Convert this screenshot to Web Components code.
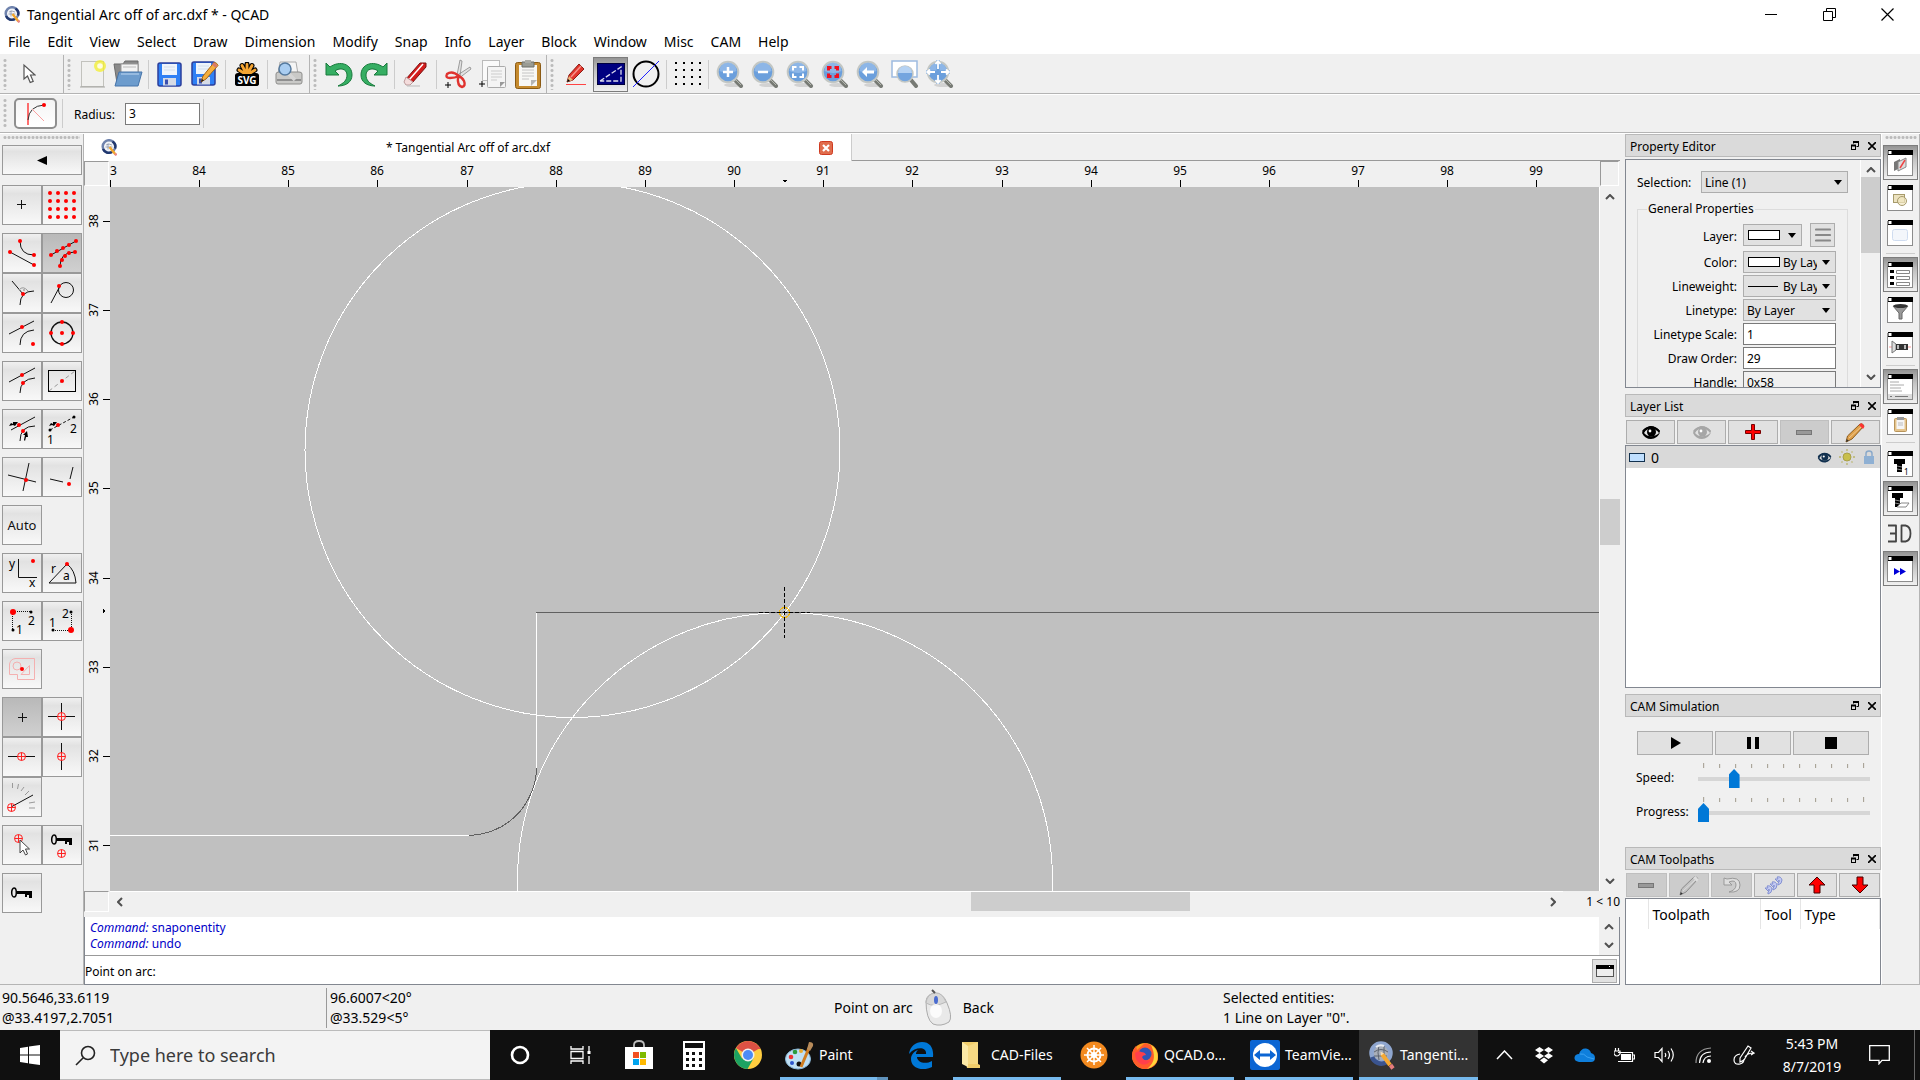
<!DOCTYPE html>
<html lang="en">
<head>
<meta charset="utf-8">
<title>Tangential Arc off of arc.dxf * - QCAD</title>
<style>
html,body{margin:0;height:100%}
body{font-family:"Noto Sans","Open Sans",sans-serif;font-size:12px;color:#000;background:#f0f0f0;overflow:hidden}
</style>
</head>
<body>
<cad-app></cad-app>
<script>
/* ---------- icon artwork ---------- */
const lens = inner => `<ellipse cx="17" cy="25" rx="9" ry="2" fill="#000" opacity=".12"/><path d="M18 19l7 7" stroke="#777a74" stroke-width="4" stroke-linecap="round"/><path d="M19 19l6 6" stroke="#b5b8b0" stroke-width="1"/><circle cx="12" cy="12" r="10.300" fill="#6b9fdc" stroke="#c3c7c4" stroke-width="2"/><path d="M3.500 11a8.500 8.500 0 0 1 17 0q-8 4-17 0z" fill="#a3c6ef" opacity=".6"/>${inner}`;
const frame = inner => `<rect x=".5" y="1.500" width="25" height="24" fill="#fff" stroke="#8c8c8c"/><rect x="1" y="0" width="25" height="5" fill="#000"/><rect x="1.500" y="1" width="3" height="3" fill="#fff"/>${inner}`;
const dot = (x,y,r=2) => `<circle cx="${x}" cy="${y}" r="${r}" fill="#f00"/>`;
const bdot = (x,y) => `<circle cx="${x}" cy="${y}" r="1.500"/>`;
const target = (x,y) => `<g fill="none" stroke="#f22"><circle cx="${x}" cy="${y}" r="4"/><path d="M${x-4} ${y}h8M${x} ${y-4}v8"/></g>`;
const ln = (d,extra='') => `<path d="${d}" fill="none" stroke="#111" ${extra}/>`;
const key = (x,y) => `<g transform="translate(${x} ${y})"><ellipse cx="3" cy="5.500" rx="2.300" ry="4.500" fill="none" stroke="#000" stroke-width="1.500"/><path d="M6 4h15v7h-3V8h-2v2h-2V7H6z"/></g>`;
const qlogo = `<circle cx="8" cy="7.500" r="6.300" fill="#f2f4f8" stroke="#6f83ad" stroke-width="2.500"/><path d="M2 10a6.300 6.300 0 0 0 9 3M14 9.500a6 6 0 0 0-2.500-7" fill="none" stroke="#21386f" stroke-width="2.400"/><path d="M4.500 8h7M7 4.500v6M5 6q3-2 6 0" stroke="#8b95a8" fill="none" stroke-width=".8"/><path d="M8.500 8l6 7.500" stroke="#f2a62a" stroke-width="2.400"/><path d="M14 14.500l1.500 1.800" stroke="#e98a8a" stroke-width="2.400"/>`;
const floppy = `<rect x="1" y="1" width="23" height="23" rx="2" fill="#2f80f5" stroke="#2c3f9c" stroke-width="1.500"/><rect x="5" y="2" width="15" height="11" fill="#eef4fb"/><path d="M7 5h11M7 8h11" stroke="#d4deea"/><rect x="6" y="16" width="13" height="7.500" fill="#d6dbe6"/><rect x="8" y="17.500" width="3" height="5" fill="#3a4fae"/>`;
const eye = c => `<path d="M1 8C3 3 7 1 10 1s7 2 9 5l-1 1C15 3 12 3 10 3 6 3 3 6 3 8c3 4 11 5 16-1-1 4-5 7-9 7-4 0-7-2-9-6z" fill="${c}"/><circle cx="10.500" cy="7" r="4.500" fill="${c}"/><circle cx="9" cy="6" r="1.400" fill="#fff"/><path d="M1 6C4 1 14-1 19 6l-1 2C14 2 6 2 3 8z" fill="${c}"/>`;
const pencil = (a,b,c) => `<path d="M2 20l1.500-6L16 2q3-1 4 2L8 17z" fill="${a}" stroke="${b}"/><path d="M15 3l4 4 1.500-2.500L17.500 1z" fill="${c}"/><path d="M5 16L17 5" stroke="#fff" opacity=".4"/><path d="M2 20l.8-3 2 1.800z" fill="#333"/>`;
const arrowUp = `<path d="M9 1l8 8h-5v8H6V9H1z" fill="#f00" stroke="#400" stroke-linejoin="round"/>`;
const ICONS = {
 qcad:[16,17,qlogo],
 qcadBig:[26,30,`<circle cx="12" cy="13" r="9.500" fill="#a9afb9" stroke="#8fa6cf" stroke-width="4.500"/><path d="M3 17a10 10 0 0 0 14 5.500" fill="none" stroke="#3a548f" stroke-width="4.500"/><path d="M5 12q7-5 14 0M5 16h13M10 5q-2 8 0 15M15 6v12" fill="none" stroke="#5d6470"/><path d="M7 7q4-3 8-1" stroke="#e8ebf0" stroke-width="2" fill="none"/><path d="M13 14l8 11" stroke="#f5a933" stroke-width="4"/><path d="M21.500 25l2.500 3.500" stroke="#e77c7c" stroke-width="4"/><path d="M11.500 11.500l3.500 2-3 2z" fill="#f4dcb4"/>`],
 cursor:[14,22,`<path d="M2 2v14l3.500-3 2.700 6.500 3-1.200L8.500 12H13z" fill="#fff" stroke="#555" stroke-width="1.200"/>`],
 newdoc:[28,30,`<rect x="2.500" y="2.500" width="22" height="25" fill="#f1f1ef" stroke="#c2c2bd"/><path d="M1 28h25" stroke="#a5a5a0"/><circle cx="21" cy="7" r="6" fill="#f3ef2c" opacity=".75"/><circle cx="21" cy="7" r="2.800" fill="#fffde0"/>`],
 open:[30,28,`<path d="M1 4h9l2-3h13v22H4z" fill="#8a8a8a" stroke="#6b6b6b"/><path d="M8 4h17v12H8z" fill="#f3f3f3" stroke="#999"/><path d="M10 7h13" stroke="#bbb"/><path d="M6 12h23l-4 14H2z" fill="#6d9ccd" stroke="#4674aa"/><path d="M8 14h18" stroke="#a5c5e6" stroke-width="1.500"/>`],
 save:[25,25,floppy],
 saveas:[28,26,floppy+`<path d="M10 21l2-6L23 1.500q3 0 4 3L15 18z" fill="#f5ae3d" stroke="#a86513"/><path d="M22 2.500l3.500 3" stroke="#d8786a" stroke-width="3"/><path d="M10 21l1-3 2 1.500z" fill="#222"/>`],
 svg:[24,24,`<rect x="0" y="11" width="24" height="13" rx="3"/><path d="M12 13L4 8M12 13L7 3.500M12 13V2M12 13l5-9.500M12 13l8-5" stroke="#000" stroke-width="5" stroke-linecap="round"/><path d="M12 13L4 8M12 13L7 3.500M12 13V2.500M12 13l5-9.500M12 13l8-5" stroke="#f5a533" stroke-width="2.800" stroke-linecap="round"/><rect x="0" y="12" width="24" height="12" rx="3"/><text x="12" y="22" fill="#fff" font-size="10" font-weight="700" text-anchor="middle">SVG</text>`],
 preview:[30,28,`<path d="M6 2h16l2 12H4z" fill="#f5f5f5" stroke="#aaa"/><path d="M2 14q0-2 3-2h20q3 0 3 2v8q0 2-2 2H4q-2 0-2-2z" fill="#c9c9c7" stroke="#8d8d8b"/><path d="M3 20h24" stroke="#8f8f8f" stroke-width="2"/><path d="M15 14l6 6" stroke="#d5d5d5" stroke-width="3.500"/><circle cx="11" cy="9" r="6" fill="#a9cdf1" stroke="#54799e" stroke-width="1.500"/>`],
 undo:[28,26,`<path d="M1 2l4 4C15-1 27 3 27 14c0 7-6 11-14 11 6-3 9-6 9-11 0-6-7-8-12-4l4 4H1z" fill="#36ae63" stroke="#187a3c"/>`],
 redo:[28,26,`<path transform="translate(28 0) scale(-1 1)" d="M1 2l4 4C15-1 27 3 27 14c0 7-6 11-14 11 6-3 9-6 9-11 0-6-7-8-12-4l4 4H1z" fill="#36ae63" stroke="#187a3c"/>`],
 eraser:[25,26,`<path d="M3 18L17 2h6v4L9 22z" fill="#d41c1c" stroke="#7c1010"/><path d="M6 19L20 3" stroke="#fff" stroke-width="1.500"/><path d="M3 16l7 5-3 3H3l-2-3z" fill="#f4dcdc" stroke="#b99"/><path d="M4 25h13" stroke="#bbb"/>`],
 cut:[28,30,`<path d="M13 16L16 1l2 1-2 15zM12 17L26 8l1 2-13 10z" fill="#e2e2e2" stroke="#888" stroke-width=".8"/><path d="M15 17q-7-6-12-2-2 4 3 4 5 0 9-2zM14 17q-1 10 4 11 4-1 2-6-2-4-6-5z" fill="none" stroke="#e0332f" stroke-width="2.400"/><path d="M1 26h6M4 23v6" stroke="#000"/>`],
 copy:[30,30,`<rect x="4.500" y="1.500" width="17" height="20" fill="#fafafa" stroke="#bbb"/><rect x="9.500" y="7.500" width="18" height="21" rx="1" fill="#f4f4f4" stroke="#aaa"/><path d="M13 12h11M13 15h11M13 18h11M13 21h6" stroke="#ccc"/><path d="M27 23l-5 5v-5z" fill="#999"/><path d="M1 25h6M4 22v6" stroke="#000"/>`],
 paste:[28,30,`<rect x="1.500" y="3.500" width="25" height="26" rx="2" fill="#c58a2e" stroke="#8a5a14"/><rect x="5" y="6" width="18" height="21" fill="#f7f7f5"/><path d="M8 11h12M8 14h12M8 17h12M8 20h7" stroke="#c4c4c4"/><path d="M8 3h12v5H8z" fill="#9a9c94" stroke="#6d6f68"/><path d="M11 1h6v3h-6z" fill="#a9aaa4"/><path d="M23 21l-6 6v-6z" fill="#b5b5b5"/>`],
 redpen:[22,24,`<path d="M2 20l2-7L14 2l5 5L8 18z" fill="#e2352c" stroke="#8c1c14"/><path d="M6 15L16 4" stroke="#f5948c" stroke-width="1.500"/><path d="M2 20l2-6 4 4z" fill="#e8b77a"/><path d="M2 20l1-3 2 2z"/><path d="M1 22.500h20" stroke="#f44"/>`],
 linetype:[28,22,`<rect width="28" height="22" fill="#000080" stroke="#000"/><path d="M3 18L24 4v14H3" fill="none" stroke="#dde" stroke-width="1.300" stroke-dasharray="5 2"/>`],
 hair:[28,28,`<circle cx="14" cy="14" r="12.500" fill="none" stroke="#000" stroke-width="2"/><path d="M1 27L27 1" stroke="#22f"/>`],
 grid:[28,28,Array.from({length:16},(_,i)=>`<rect x="${1+(i%4)*8}" y="${2+(i>>2)*7}" width="2" height="2"/>`).join('')],
 zin:[28,28,lens('<path d="M12 7v10M7 12h10" stroke="#fff" stroke-width="2.500"/>')],
 zout:[28,28,lens('<path d="M7 12h10" stroke="#fff" stroke-width="2.500"/>')],
 zauto:[28,28,lens('<path d="M7 10.500V7h3.500M13.500 7H17v3.500M17 13.500V17h-3.500M10.500 17H7v-3.500" fill="none" stroke="#fff" stroke-width="2"/>')],
 zsel:[28,28,lens('<path d="M7.500 10.500v-3h3M13.500 7.500h3v3M16.500 13.500v3h-3M10.500 16.500h-3v-3" fill="none" stroke="#f01020" stroke-width="3"/>')],
 zprev:[28,28,lens('<path d="M6 12l5-5v3.500h7v3h-7V17z" fill="#fff"/>')],
 zwin:[28,28,`<rect x="1" y="1" width="25" height="16" fill="#fff" stroke="#9dbbe0" stroke-width="1.500"/><path d="M20 20l5 6" stroke="#777a74" stroke-width="4" stroke-linecap="round"/><circle cx="14" cy="14" r="8" fill="#74a5df" stroke="#c3c7c4" stroke-width="1.500"/><path d="M7 13a7 7 0 0 1 14 0z" fill="#b5d2f3"/>`],
 zpan:[28,28,lens('<path d="M12 0v24M0 12h24" stroke="#6b9fdc" stroke-width="3"/><path d="M12 1v8M12 15v8M1 12h8M15 12h8M9.500 4L12 1l2.500 3M9.500 20l2.500 3 2.500-3M4 9.500L1 12l3 2.500M20 9.500l3 2.500-3 2.500" fill="none" stroke="#fff" stroke-width="1.800"/>')],
 tanarc:[24,24,`<path d="M4 1v22" stroke="#f22" stroke-width="1.300"/><path d="M4 18Q5 4 20 3" fill="none" stroke="#333"/><path d="M8 7l12 12" stroke="#f9a0a0"/>${dot(20,3)}`],
 close:[14,14,`<rect x=".5" y=".5" width="13" height="13" rx="2" fill="#e06c4c" stroke="#cf3a20"/><path d="M4 4l6 6M10 4l-6 6" stroke="#fff" stroke-width="2.200"/>`],
 up:[10,6,`<path d="M1 5l4-4 4 4" fill="none" stroke="#505050" stroke-width="2"/>`],
 down:[10,6,`<path d="M1 1l4 4 4-4" fill="none" stroke="#505050" stroke-width="2"/>`],
 left:[6,10,`<path d="M5 1L1 5l4 4" fill="none" stroke="#505050" stroke-width="2"/>`],
 right:[6,10,`<path d="M1 1l4 4-4 4" fill="none" stroke="#505050" stroke-width="2"/>`],
 float:[8,9,`<path d="M2.500 2.500v-2h5v5h-2" fill="none" stroke="#000"/><path d="M2 1h6" stroke="#000" stroke-width="2"/><rect x=".5" y="4.500" width="4" height="4" fill="none" stroke="#000"/><path d="M0 4.500h5" stroke="#000" stroke-width="2"/>`],
 x:[8,8,`<path d="M0 0l8 8M8 0L0 8" stroke="#000" stroke-width="1.600"/>`],
 min:[12,12,`<path d="M0 6.500h12" stroke="#000"/>`],
 restore:[13,13,`<path d="M3.500 3V.5h9v9H10M.5 3.500h9v9h-9z" fill="none" stroke="#000"/>`],
 bigx:[13,13,`<path d="M.5 .5l12 12M12.500 .5l-12 12" stroke="#000" stroke-width="1.200"/>`],
 lines:[16,14,`<path d="M1 1.500h14M1 7h14M1 12.500h14" stroke="#888" stroke-width="2.200" stroke-linecap="round"/>`],
 console:[18,12,`<rect x=".5" y=".5" width="17" height="11" fill="#eee" stroke="#555"/><path d="M0 2h18" stroke="#000" stroke-width="4"/><rect x="13" y="1" width="1" height="1" fill="#fff"/>`],
 eyeBlack:[20,14,eye('#000')], eyeGray:[20,14,eye('#a6a6a6')], eyeBlue:[15,11,`<g transform="scale(.75)">${eye('#12314f')}</g>`],
 plus:[16,16,`<path d="M6.500 .5h3v6h6v3h-6v6h-3v-6h-6v-3h6z" fill="#f00" stroke="#700"/>`],
 minus:[16,5,`<rect x=".5" y=".5" width="15" height="4" fill="#999" stroke="#777"/>`],
 pen:[22,21,pencil('#e0a14a','#8a5b20','#f33')], penGray:[22,21,pencil('#c4c4c4','#8a8a8a','#ddd')],
 undoGray:[20,18,`<path d="M2 2v7h8L7 6q7-3 7 3 0 5-7 7 11 1 11-7 0-9-13-6z" fill="#dedede" stroke="#999"/>`],
 chain:[22,20,`<g fill="#c3caf2" stroke="#8390d2"><path id="s" d="M2 13h3l-1-2q4-1 5 3 0 4-4 5v-2q2-1 1-3l-1 2z"/><path d="M7 9h3L9 7q4-1 5 3 0 4-4 5v-2q2-1 1-3l-1 2z"/><path d="M12 4h3l-1-2q4-1 5 3 0 4-4 5V8q2-1 1-3l-1 2z"/></g>`],
 arrowup:[18,18,arrowUp], arrowdown:[18,18,`<g transform="rotate(180 9 9)">${arrowUp}</g>`],
 sun:[16,16,`<circle cx="8" cy="8" r="4" fill="#c8bf4c" stroke="#a9a04a"/><path d="M8 0v2M8 14v2M0 8h2M14 8h2M2.500 2.500l1 1M12.500 12.500l1 1M13.500 2.500l-1 1M2.500 13.500l1-1" stroke="#b9b46a" stroke-width="1.300"/>`],
 lock:[12,14,`<path d="M3 6V3.500q0-2.500 3-2.500t3 2.500V6" fill="none" stroke="#8aa9ca" stroke-width="1.500"/><rect x="1" y="6" width="10" height="8" fill="#8fb0d3"/>`],
 play:[11,12,`<path d="M1 0l10 6-10 6z"/>`], pause:[12,12,`<path d="M0 0h4v12H0zM8 0h4v12H8z"/>`], stop:[12,12,`<path d="M0 0h12v12H0z"/>`],
 fLib:[27,26,frame(`<path d="M7 12l6-3v9l-6 3z" fill="#777"/><path d="M11 12l8-4v9l-8 4z" fill="#ddd" stroke="#888"/><path d="M13 18l5-8" stroke="#e44" stroke-width="1.500"/>`)],
 fBlock:[27,26,frame(`<rect x="6.500" y="9.500" width="11" height="8" fill="#ece2bf" stroke="#a79b6c"/><circle cx="15" cy="16" r="4.500" fill="#f2e8c2" fill-opacity=".7" stroke="#a79b6c"/>`)],
 fView:[27,26,frame(`<rect x="5.500" y="9.500" width="15" height="11" rx="2" fill="#f3f6fb" stroke="#cfdcf0"/>`)],
 fProp:[27,26,frame(`<path d="M3 8h4v3H3zM3 14h4v3H3zM3 20h4v3H3z"/><path d="M9.500 8.500h13v3h-13zM9.500 14.500h13v3h-13zM9.500 20.500h13v3h-13z" fill="#fff" stroke="#888"/>`)],
 fFilter:[27,26,frame(`<path d="M6 9h15l-6 7v6h-3v-6z" fill="#999" stroke="#666"/><ellipse cx="13.500" cy="9" rx="7" ry="2" fill="#333"/>`)],
 fLamp:[27,26,frame(`<path d="M2 15h22" stroke="#f99"/><path d="M5 9l4 3v6l-4 3z" fill="#ddd" stroke="#777"/><rect x="9" y="12" width="12" height="6" fill="#333"/><path d="M11 13v4M18 13v4" stroke="#bbb" stroke-width="2"/>`)],
 fCmd:[27,26,frame(`<path d="M3 8h9M3 11h14M3 14h11M3 17h12" stroke="#aaa"/><rect x="1" y="20" width="24" height="5" fill="#ddd"/><path d="M3 22.500h2M8 22.500h13" stroke="#777"/>`)],
 fClip:[27,26,frame(`<rect x="7.500" y="9.500" width="12" height="13" rx="1" fill="#e5c48c" stroke="#b8945a"/><rect x="9.500" y="11" width="8" height="9" fill="#f5f5f5"/><path d="M10 8h7v3h-7z" fill="#999"/><path d="M11 14h5M11 16h5" stroke="#bbb"/>`)],
 fTool1:[27,26,frame(`<path d="M7 8h11v5H7zM10 13h5v8h-5z"/><path d="M10 15l5 1M10 18l5 1" stroke="#888"/><text x="17" y="24" font-size="8">1</text>`)],
 fTool2:[27,26,frame(`<path d="M5 7h11v5H5zM8 12h5v9H8z"/><path d="M8 14l5 1M8 17l5 1" stroke="#888"/><path d="M14 17h8l-3 4h-9z" fill="#fff" stroke="#888"/>`)],
 fSim:[27,26,frame(`<path d="M7 12l6 3.500-6 3.500zM13 12l6 3.500-6 3.500z" fill="#0000d8"/>`)],
 threeD:[27,20,`<path d="M1 1.500h8v8H3M9 9.500v8H1M14.500 1.500v16h4q5-1 5-8t-5-8z" fill="none" stroke="#444" stroke-width="1.800" stroke-linejoin="round"/>`],
 mouse:[28,38,`<path d="M2 12q1-7 9-8 8 0 12 10 6 14 2 19-8 5-16 2Q2 30 2 12z" fill="#e9e9e9" stroke="#aaa"/><path d="M2 14q8 5 20-1Q18 3 11 4 3 5 2 14z" fill="#d8d8d8" stroke="#b9b9b9"/><ellipse cx="12" cy="22" rx="6" ry="7" fill="#fff" opacity=".8"/><path d="M8 1l3 3" stroke="#555" stroke-width="2"/><ellipse cx="12" cy="11" rx="2" ry="4" fill="#4a6cd0"/>`],
 win:[20,20,`<path d="M0 3l8-1.200V9.500H0zM9 1.600L20 0v9.500H9zM0 10.500h8v7.700L0 17zM9 10.500h11V20L9 18.400z" fill="#fff"/>`],
 search:[21,21,`<circle cx="13" cy="8" r="6.500" fill="none" stroke="#222" stroke-width="1.600"/><path d="M8 13l-7 7" stroke="#222" stroke-width="1.600"/>`],
 cortana:[20,20,`<circle cx="10" cy="10" r="8" fill="none" stroke="#fff" stroke-width="2.600"/>`],
 taskview:[21,20,`<g fill="none" stroke="#fff" stroke-width="1.300"><path d="M1 1v3h12V1M1 19v-3h12v3M1 6.500h12v7H1zM19 1v5M19 11v8"/></g><rect x="17.500" y="6" width="3" height="3" fill="#fff"/>`],
 store:[28,30,`<path d="M9 8V5q0-4 5-4t5 4v3" fill="none" stroke="#bbb" stroke-width="1.800"/><path d="M0 7h28v22H0z" fill="#fff"/><path d="M8 12h6v6H8z" fill="#f25022"/><path d="M15 12h6v6h-6z" fill="#7fba00"/><path d="M8 19h6v6H8z" fill="#00a4ef"/><path d="M15 19h6v6h-6z" fill="#ffb900"/>`],
 calc:[22,29,`<path d="M0 0h22v29H0z" fill="#fff"/><path d="M2 2h18v5H2zM3 11h3v3H3zM9 11h3v3H9zM16 11h3v3h-3zM3 17h3v3H3zM9 17h3v3H9zM16 17h3v3h-3zM3 23h3v3H3zM9 23h3v3H9zM16 23h3v3h-3z" fill="#111"/>`],
 chrome:[28,28,`<circle cx="14" cy="14" r="14" fill="#ffcd40"/><path d="M14 14L1.900 7A14 14 0 0 1 26.100 7z" fill="#dd5144"/><path d="M14 7h12.100" stroke="#dd5144" stroke-width="2"/><path d="M1.900 7A14 14 0 0 0 13.500 28l6-10.500L8 17.500z" fill="#1da362"/><circle cx="14" cy="14" r="6.500" fill="#f1f1f1"/><circle cx="14" cy="14" r="5" fill="#4c8bf5"/>`],
 paint:[29,29,`<ellipse cx="13" cy="18" rx="12.500" ry="10" fill="#bfe0f5" stroke="#8ab8d8"/><circle cx="6" cy="16" r="2.300" fill="#e33"/><circle cx="10" cy="11" r="2.300" fill="#2a9a3c"/><circle cx="16" cy="10" r="2" fill="#e8a92c"/><circle cx="7" cy="22" r="2" fill="#2c55cc"/><circle cx="14" cy="23" r="2.500" fill="#111"/><path d="M16 26L24 7" stroke="#d07d20" stroke-width="3"/><path d="M22 8l2-7q5 0 4 4l-3 5z" fill="#b88b5a"/>`],
 edge:[26,27,`<path d="M1 12C2 4 8 0 14 0c8 0 12 6 11 15H9c0 5 8 8 15 4v6C14 30 3 26 3 17c0-4 3-8 7-9-2 2-2 3-2 4h10c1-7-10-8-17 0z" fill="#0078d7"/>`],
 folder:[18,26,`<path d="M0 0h16v22l2 1v3H5z" fill="#f1cd6a"/><path d="M0 0l6 4v21l-6-3z" fill="#fce9a6"/><path d="M6 4l10-4v22H6z" fill="#f6d983"/>`],
 wheel:[28,28,`<circle cx="14" cy="14" r="13.500" fill="#f38a1f"/><g fill="none" stroke="#fff" stroke-width="2"><circle cx="14" cy="14" r="6.500"/><circle cx="14" cy="14" r="2"/><path d="M14 4v20M4 14h20M7 7l14 14M21 7L7 21" stroke-width="1.500"/></g>`],
 firefox:[28,28,`<circle cx="14" cy="15" r="13" fill="#ff9a1f"/><path d="M14 2c9 2 13 8 13 14 0 8-6 12-13 12S1 22 1 15c0-5 2-8 4-10l1 4z" fill="#ff5b2c"/><path d="M20 4c8 5 8 14 5 18-2 3-6 5-9 6 9-7 8-15 4-24z" fill="#ffd43a"/><circle cx="14" cy="13" r="6.500" fill="#3155b5"/><path d="M4 12q4-3 6-1 4 0 5 3-3 0-4 2 2 5 9 3-4 6-10 4-6-3-6-11z" fill="#ff3f4b"/>`],
 tv:[30,30,`<rect width="30" height="30" rx="2" fill="#0b65d3"/><circle cx="15" cy="15" r="12" fill="#fff"/><path d="M4 15l6-5v3.500h10V10l6 5-6 5v-3.500H10V20z" fill="#0b65d3"/>`],
 caret:[17,10,`<path d="M1 9l7.500-8L16 9" fill="none" stroke="#fff" stroke-width="1.500"/>`],
 dropbox:[18,17,`<path d="M4.500 0L9 3 4.500 6 0 3zM13.500 0L18 3l-4.500 3L9 3zM4.500 6L9 9l-4.500 3L0 9zM13.500 6L18 9l-4.500 3L9 9zM9 10.500l4 2.800L9 16.500l-4-3.200z" fill="#fff"/>`],
 onedrive:[21,14,`<path d="M5 14Q0 13 .5 9.500 1 6 5 6 7 0 12 .5q4 .5 5 4.500 4 1 4 5 0 4-4 4z" fill="#0f7fdc"/><path d="M6 6q4-1 7 3l7 2" fill="none" stroke="#3aa2f2"/>`],
 battery:[21,15,`<path d="M4 4.500h14.500v9H4M18.500 7h2v4h-2M0 3h6v3q-3 4-6 0zM1.500 0v3M4.500 0v3" fill="none" stroke="#fff" stroke-width="1.200"/><path d="M7 6h10v6H7z" fill="#fff"/>`],
 volume:[21,16,`<path d="M1 5.500h3.500L8 1.500v13L4.500 10.500H1z" fill="none" stroke="#fff" stroke-width="1.200"/><path d="M11 6q1.500 2 0 4M14 4q3 4 0 8M17 1.500q4.500 6.500 0 13" fill="none" stroke="#fff" stroke-width="1.200"/>`],
 wifi:[18,17,`<g fill="none" stroke="#fff" stroke-width="1.200"><path d="M1 16Q1 2 16 1" stroke="#999"/><path d="M4.500 16Q5 5 16 5M8 16Q9 9 16 9"/></g><circle cx="14" cy="14" r="2" fill="#fff"/>`],
 ink:[22,21,`<path d="M7 13L15 1l3 2-7 12-4 2zM7 9Q1 10 1 15q0 5 6 4 4-1 4-5M12 12q2-4 9-4l-3-2M21 8l-3 2" fill="none" stroke="#fff" stroke-width="1.200"/>`],
 notify:[21,20,`<path d="M.7 .7h19.600v14.600H13l-3 3.500V15.300H.7z" fill="none" stroke="#fff" stroke-width="1.300"/>`],
 /* snap palette, 40 x 40 cells */
 sBack:[10,9,`<path d="M10 0v9L0 4.500z"/>`],
 sFree:[40,40,ln('M15 19.500h9M19.500 15v9')],
 sGrid:[40,40,Array.from({length:16},(_,i)=>dot(8+(i%4)*8,8+(i>>2)*8)).join('')],
 sEnd:[40,40,ln('M8 19l24 13M18 8q0 14 14 14')+dot(18,8)+dot(32,22)+dot(8,19)+dot(32,32)],
 sOn:[40,40,ln('M9 22L34 8M18 33q0-14 15-14')+[[9,22],[15,18],[21,15],[27,12],[34,8],[18,33],[20,27],[23,23],[27,20],[33,19]].map(p=>dot(...p)).join('')],
 sPerp:[40,40,ln('M10 8l11 13M18 32Q18 18 32 18')+'<path d="M17 17q4-5 9 1" fill="none" stroke="#999"/><circle cx="22" cy="17" r=".8" fill="#777"/>'+dot(21,21)],
 sTan:[40,40,ln('M9 30l9-17')+'<circle cx="24" cy="17" r="7.500" fill="none" stroke="#111"/>'+dot(17,13)],
 sRef:[40,40,ln('M7 21L32 8M18 32q0-14 14-15')+dot(20,14)+dot(31,31)],
 sCen:[40,40,'<circle cx="20" cy="20" r="11" fill="none" stroke="#111" stroke-width="1.300"/>'+dot(20,20)+dot(9,20)+dot(31,20)+dot(20,9)+dot(20,31)],
 sMid:[40,40,ln('M7 21L33 7M18 32q0-14 15-15')+dot(20,14)+dot(21,22)],
 sRect:[40,40,'<path d="M7 30L33 10" stroke="#999" stroke-dasharray="4 3"/><rect x="6.500" y="9.500" width="27" height="21" fill="none" stroke="#000"/>'+dot(20,20)],
 sDist:[40,40,ln('M9 21L33 8M18 32q0-15 15-15')+'<path d="M7 17l2-3 2 1 0-2 5 0-3 4-2-1zM22 31l1-5-2 0 4-4 1 6-2 0-1 4z"/>'+dot(17,16)+dot(21,22)],
 s12:[40,40,ln('M8 21L32 8','stroke-dasharray="3 2"')+bdot(32,8)+bdot(8,21)+'<path d="M7 17l2-3 2 1 0-2 4 0-3 4-2-1z"/><text x="5" y="35">1</text><text x="28" y="24">2</text>'+dot(16,16)],
 sInt:[40,40,ln('M6 18l28 7M21 34l6-28')+dot(24,23)],
 sIntM:[40,40,ln('M8 22l13 3M28 22l3-12')+dot(27,27)],
 sXY:[40,40,ln('M16.500 6v18.500H35')+'<text x="7" y="15">y</text><text x="27" y="34">x</text>'+dot(31,8)],
 sPolar:[40,40,ln('M7 30L25 11q8 6 9 19z')+'<text x="9" y="20">r</text><text x="21" y="27">a</text>'+dot(25,11)],
 sX1:[40,40,ln('M11 10.500h18M10.500 11v18','stroke-dasharray="1 1"')+bdot(29,11)+bdot(11,29)+'<text x="14" y="33">1</text><text x="26" y="24">2</text>'+dot(11,11,3)],
 sX2:[40,40,ln('M11 29.500h18M29.500 11v18','stroke-dasharray="1 1"')+bdot(29,11)+bdot(11,29)+'<text x="7" y="26">1</text><text x="20" y="17">2</text>'+dot(29,29,3)],
 sShape:[40,40,'<g fill="none" stroke="#f4b0b0"><path d="M13 9.500h19.500v21h-17v-5h-8V15q1-5 6-5.500z"/><circle cx="15" cy="17" r="4"/><path d="M19 25.500h8.500v-9z"/></g>'+dot(20,20)],
 sPlus:[40,40,ln('M16 20.500h9M20.500 16v9')],
 sOrtho:[40,40,ln('M6 19.500h27M19.500 6v27')+target(19.5,19.5)],
 sHor:[40,40,ln('M6 19.500h27')+target(19.5,19.5)],
 sVer:[40,40,ln('M19.500 6v27')+target(19.5,19.5)],
 sAng:[40,40,ln('M9 30l22-12')+'<path d="M10.500 6v5M16.500 7l-1 5M22 10l-3 4M27 14l-4 4M33 25l-6 1M33 31h-6" stroke="#999"/>'+target(9.5,30.5)],
 sRel:[40,40,target(16.5,13.5)+'<path d="M18 15v13l3-3 2.500 5 2-1-2-5h4z" fill="#fff" stroke="#444"/>'],
 sKeyT:[40,40,key(9,9)+target(19.5,28.5)],
 sKey:[40,40,key(9,14)],
};

const define = (name, html, setup) => {
  const t = document.createElement('template');
  t.innerHTML = html;
  customElements.define(name, class extends HTMLElement {
    constructor(){ super(); this.attachShadow({mode:'open'}).append(t.content.cloneNode(true)); }
    connectedCallback(){ if(setup && !this.ready){ this.ready = true; setup(this, this.shadowRoot); } }
  });
};

define('x-icon', `<style>:host{display:inline-flex;flex:none}svg{display:block;font:12px "Noto Sans",sans-serif}</style>`, (el,root)=>{
  const [w,h,body] = ICONS[el.getAttribute('name')];
  root.innerHTML += `<svg width="${w}" height="${h}" viewBox="0 0 ${w} ${h}" aria-hidden="true">${body}</svg>`;
});

/* A square tool bar button; "on" shows it pressed */
define('tool-button', `<style>
:host{display:flex;flex:none;width:35px;height:35px}
button{flex:1;display:flex;align-items:center;justify-content:center;padding:0;border:1px solid transparent;background:none}
:host([on]) button{border-color:#7c7c7c;background:linear-gradient(#949494,#c4c4c4 40%,#f0f0f0)}
</style><button><slot></slot></button>`, (el,root)=>root.querySelector('button').setAttribute('aria-label', el.getAttribute('label')||'tool'));

define('tool-group', `<style>
:host{display:flex;align-items:center;border-right:1px solid #b4b4b4;box-sizing:border-box;height:38px}
i{align-self:stretch;width:11px;margin:3px 0;flex:none;background:radial-gradient(circle,#bbb 1px,transparent 2px) 3px 0/4px 5px repeat-y}
</style><i></i><slot></slot>`);

define('tool-sep', `<style>:host{display:block;flex:none;width:1px;height:29px;margin:0 3px;background:#ccc}:host([flat]){width:29px;height:1px;margin:3px auto}</style>`);

define('title-bar', `<style>
:host{display:flex;align-items:center;height:28px;background:#fff;font-size:14px;line-height:20px;padding:0 4px}
span{margin-left:7px;flex:1;padding-top:1px}
button{width:58px;height:28px;border:0;background:none;padding:0;display:flex;align-items:center;justify-content:center}
</style><x-icon name="qcad"></x-icon><span>Tangential Arc off of arc.dxf * - QCAD</span>
<button aria-label="Minimize"><x-icon name="min"></x-icon></button><button aria-label="Restore"><x-icon name="restore"></x-icon></button><button aria-label="Close"><x-icon name="bigx"></x-icon></button>`);

define('menu-bar', `<style>
:host{display:block;background:#fff;border-bottom:1px solid #f0f0f0}
nav{display:flex;gap:1px;height:24px;padding-top:2px;align-items:center}
button{font:14px/20px "Noto Sans",sans-serif;border:0;background:none;padding:0 8px;color:#000}
</style><nav></nav>`, (el,root)=>{
  root.querySelector('nav').innerHTML = 'File,Edit,View,Select,Draw,Dimension,Modify,Snap,Info,Layer,Block,Window,Misc,CAM,Help'.split(',').map(t=>`<button>${t}</button>`).join('');
});

define('main-toolbar', `<style>
:host{display:flex;height:38px;border-bottom:1px solid #b4b4b4;box-shadow:0 1px #fff;margin-bottom:1px}
.select{width:64px}.file{padding-right:3px}.edit{padding-right:1px}.view{border:0}
</style>
<tool-group class="select"><tool-button label="Select"><x-icon name="cursor"></x-icon></tool-button></tool-group>
<tool-group class="file" data-i="newdoc open | save saveas | svg | preview"></tool-group>
<tool-group class="edit" data-i="undo redo | eraser | cut copy paste"></tool-group>
<tool-group class="view" data-i="redpen *linetype hair | grid | zin zout zauto zsel zprev zwin zpan"></tool-group>`, (el,root)=>{
  root.querySelectorAll('[data-i]').forEach(g=>g.innerHTML = g.dataset.i.split(' ').map(n=> n==='|' ? '<tool-sep></tool-sep>' :
    `<tool-button label="${n.replace('*','')}" ${n[0]==='*'?'on':''}><x-icon name="${n.replace('*','')}"></x-icon></tool-button>`).join(''));
});

define('option-bar', `<style>
:host{display:flex;align-items:center;height:37px;border-bottom:1px solid #b4b4b4;box-shadow:0 1px #fff;margin-bottom:1px}
tool-group{border:0;height:37px}
button{width:43px;height:31px;margin-left:3px;border:2px solid #8f8f8f;border-radius:5px;background:linear-gradient(#f4f4f4,#fff);padding:0;display:flex;align-items:center;justify-content:center}
tool-sep{margin:0 11px 0 5px}
label{padding-top:2px}
input{width:75px;height:22px;box-sizing:border-box;margin:0 3px 0 10px;border:1px solid #7a7a7a;padding:0 3px;font:12px "Noto Sans",sans-serif}
input+tool-sep{margin:0}
</style><tool-group><button aria-label="Arc tangential"><x-icon name="tanarc"></x-icon></button></tool-group><tool-sep></tool-sep><label for="r">Radius:</label><input id="r" value="3"><tool-sep></tool-sep>`);

define('snap-palette', `<style>
:host{display:flex;flex-direction:column;gap:8px;width:83px;border-right:1px solid #b4b4b4;border-bottom:1px solid #b4b4b4;box-sizing:content-box}
i{height:3px;margin:2px 3px -2px;background:radial-gradient(circle,#bbb 1px,transparent 2px) 0 0/4px 3px repeat-x}
div{display:flex;flex-wrap:wrap;padding-left:2px}
button{width:40px;height:40px;box-sizing:border-box;border:1px solid #999;padding:0;background:linear-gradient(#f0f0f0,#e2e2e2 20%,#f8f8f8);display:flex;align-items:center;justify-content:center;font:13px "Noto Sans",sans-serif;color:#111}
x-icon{margin:-1px}
button.on{background:linear-gradient(#b9b9b9,#d0d0d0)}
button.back{width:80px;height:30px;margin-bottom:2px}
</style><i></i>`, (el,root)=>{
  ['sBack','sFree sGrid','sEnd *sOn sPerp sTan sRef sCen','sMid sRect','sDist s12','sInt sIntM','Auto','sXY sPolar','sX1 sX2','sShape','*sPlus sOrtho sHor sVer sAng','sRel sKeyT','sKey'].forEach(row=>{
    const d = document.createElement('div');
    d.innerHTML = row.split(' ').map(n=>{ const on=n[0]==='*'; n=n.replace('*','');
      return n==='Auto' ? '<button>Auto</button>' : `<button class="${on?'on':n==='sBack'?'back':''}" aria-label="${n.slice(1)}"><x-icon name="${n}"></x-icon></button>`; }).join('');
    root.append(d);
  });
});

/* Ruler with one labelled tick per drawing unit */
define('cad-ruler', `<style>:host{display:block;overflow:hidden;min-width:0;min-height:0;position:relative}svg{position:absolute;inset:0;display:block;width:100%;height:100%;font:12px "Noto Sans",sans-serif;shape-rendering:crispEdges}</style>`, (el,root)=>{
  const vertical = el.hasAttribute('vertical'), first = +el.getAttribute('first'), step = vertical ? -1 : 1;
  const at = +el.getAttribute('at'), n = +el.getAttribute('count'), mark = +el.getAttribute('mark');
  let s = '';
  for(let i=0;i<n;i++){ const p = Math.round(at + i*89.15), v = first + i*step;
    if(vertical) s += `<path d="M19 ${p+.5}h7" stroke="#000"/><text transform="translate(14 ${p}) rotate(-90)" text-anchor="middle">${v}</text>`;
    else s += `<path d="M${p+.5} 19v7" stroke="#000"/><text x="${i?p:0}" y="14" text-anchor="${i?'middle':'start'}">${i?v:v%10}</text>`; }
  s += vertical ? `<path d="M19 ${mark-2.5}v5l3-2.500z"/>` : `<path d="M${mark-2.5} 19h5l-2.500 3z"/>`;
  root.innerHTML += `<svg>${s}</svg>`;
});

define('scroll-bar', `<style>
:host{display:flex;flex-direction:column;align-items:center;background:#f0f0f0;padding:7px 0;box-sizing:border-box}
:host([horizontal]){flex-direction:row;padding:0 7px}
span{display:flex}
.track{flex:1;align-self:stretch;display:flex;flex-direction:inherit;margin:4px 0}
:host([horizontal]) .track{margin:0 4px}
.a{flex:var(--before,0)}.t{flex:var(--size,0);background:#cdcdcd}.b{flex:var(--after,1)}
</style><span id="s"></span><div class="track"><div class="a"></div><div class="t"></div><div class="b"></div></div><span id="e"></span>`, (el,root)=>{
  const h = el.hasAttribute('horizontal');
  root.getElementById('s').innerHTML = `<x-icon name="${h?'left':'up'}"></x-icon>`;
  root.getElementById('e').innerHTML = `<x-icon name="${h?'right':'down'}"></x-icon>`;
});

define('drawing-view', `<style>
:host{display:flex;flex-direction:column;flex:1;min-height:0}
.tabs{display:flex;height:27px}
.tab{display:flex;align-items:center;width:768px;box-sizing:border-box;background:#fff;border-right:1px solid #ccc;padding:0 18px 0 17px}
.tab span{flex:1;text-align:center}
.tab button{border:0;background:none;padding:0;display:flex}
.rest{flex:1;border-bottom:1px solid #999;box-sizing:border-box}
.grid{flex:1;display:grid;grid-template:26px minmax(0,1fr) 26px/26px minmax(0,1fr) 20px}
.corner{border:1px solid #fff;border-top-color:#999;border-left-color:#999;margin:0 1px 1px 0}
.bottom{margin-bottom:5px}
.canvas{position:relative;background:#c0c0c0;overflow:hidden;border-right:1px solid #fff}
.canvas svg{position:absolute;inset:0;width:100%;height:100%;shape-rendering:crispEdges;fill:none}
.vs{--before:295;--size:46;--after:329}
.hs{--before:843;--size:218;--after:356;flex:1;height:20px;border-top:1px solid #fff}
.foot{grid-column:2/4;display:flex}
.foot span{width:57px;text-align:right;line-height:22px}
</style>
<div class="tabs"><div class="tab"><x-icon name="qcad"></x-icon><span>* Tangential Arc off of arc.dxf</span><button aria-label="Close tab"><x-icon name="close"></x-icon></button></div><div class="rest"></div></div>
<div class="grid">
<div class="corner"></div><cad-ruler first="83" at="0" count="17" mark="675"></cad-ruler><div class="corner"></div>
<cad-ruler vertical first="38" at="34" count="8" mark="424"></cad-ruler>
<div class="canvas"><svg aria-label="Drawing">
<g stroke="#fff"><circle cx="462.500" cy="263" r="267.500"/><circle cx="675" cy="693" r="267.500"/><path d="M426.500 426v156M0 648.500h359"/></g>
<path d="M426 425.500h1100M426.500 581q0 22-16 43-20 23-51 24.500" stroke="#606060"/>
<circle cx="674.500" cy="425.500" r="5" stroke="#f0b810"/>
<path d="M674.500 400v51M649 425.500h51" stroke="#000" stroke-dasharray="4 2"/></svg></div>
<scroll-bar class="vs"></scroll-bar>
<div class="corner bottom"></div><div class="foot"><scroll-bar class="hs" horizontal></scroll-bar><span>1 &lt; 10</span></div>
</div>`);

define('command-line', `<style>
:host{display:block;height:68px;box-sizing:border-box;border:1px solid #828790;border-top:0;background:#fff}
.log{display:flex;height:38px;border-bottom:1px solid #999;overflow:hidden}
.text{flex:1;display:flex;flex-direction:column;justify-content:flex-end;padding:0 5px 3px;line-height:16px;color:#0000c8}
p{margin:0}
scroll-bar{width:20px}
.row{display:flex;align-items:center;height:29px}
input{flex:1;border:0;outline:0;padding:0 0 0 2px;font:12px "Noto Sans",sans-serif}
label{width:76px;white-space:nowrap;padding-top:1px}
button{width:25px;height:24px;padding:0;border:1px solid #adadad;background:#e1e1e1;display:flex;align-items:center;justify-content:center;margin-right:2px}
</style><div class="log"><div class="text"><p><i>Command:</i> snaponentity</p><p><i>Command:</i> undo</p></div><scroll-bar></scroll-bar></div>
<div class="row"><label for="c">Point on arc:</label><input id="c"><button aria-label="Command history"><x-icon name="console"></x-icon></button></div>`);

define('dock-panel', `<style>
:host{display:flex;flex-direction:column;min-height:0}
header{display:flex;align-items:center;gap:9px;height:23px;box-sizing:border-box;border:1px solid #b9b9b9;background:#dadada;padding:0 4px;flex:none}
h2{font:12px/16px "Noto Sans",sans-serif;margin:0;flex:1;padding-top:2px}
header button{border:0;background:none;padding:0;display:flex}
</style><header><h2></h2><button aria-label="Float"><x-icon name="float"></x-icon></button><button aria-label="Close"><x-icon name="x"></x-icon></button></header><slot></slot>`,
(el,root)=>root.querySelector('h2').textContent = el.getAttribute('heading'));

define('property-form', `<style>
:host{display:flex;height:229px;box-sizing:border-box;border:1px solid #828790;margin-top:2px}
.form{flex:1;overflow:hidden;padding:11px 12px 0 11px;min-width:0}
.sel{display:flex;align-items:center;justify-content:space-between}
.combo{position:relative;display:flex}
.combo::after{content:"";position:absolute;right:6px;top:9px;border:4px solid transparent;border-top:5px solid #000;border-bottom:0}
select,input,.menu{font:12px "Noto Sans",sans-serif;height:22px;box-sizing:border-box;border:1px solid #adadad;background:#e1e1e1;padding:0 18px 0 3px;appearance:none;color:#000;border-radius:0;width:100%}
input{background:#fff;border-color:#7a7a7a;padding:0 3px}
input[readonly]{background:#f0f0f0}
.sel .combo{width:147px}
fieldset{border:1px solid #dcdcdc;margin:8px 0 0;padding:0 11px 0 9px;min-width:0}
legend{padding:0 1px;line-height:16px}
.g{display:grid;grid-template-columns:minmax(0,1fr) 93px;gap:2px 6px;align-items:center;text-align:right;padding-top:6px}
.g>div{text-align:left}
.lay{display:flex;justify-content:space-between;align-items:center;padding-right:1px;margin-bottom:2px}
.lay .combo{width:59px}
.menu{width:25px;height:24px;padding:0;display:flex;align-items:center;justify-content:center}
.sw{position:absolute;left:5px;top:6px;width:30px;height:8px;border:1px solid #000;background:#fff}
.rule{height:0;border-width:1px 0 0;top:11px}
.pic select{padding:0 18px 0 39px;text-overflow:clip}
scroll-bar{--before:0;--size:74;--after:115;width:20px;border-left:1px solid #fff}
</style><div class="form">
<div class="sel"><label for="a">Selection:</label><div class="combo"><select id="a"><option>Line (1)</option></select></div></div>
<fieldset><legend>General Properties</legend><div class="g">
<label for="b">Layer:</label><div class="lay"><div class="combo"><select id="b"><option aria-label="0"></option></select><i class="sw"></i></div><button class="menu" aria-label="Layers"><x-icon name="lines"></x-icon></button></div>
<label for="c">Color:</label><div class="combo pic"><select id="c"><option>By Layer</option></select><i class="sw"></i></div>
<label for="d">Lineweight:</label><div class="combo pic"><select id="d"><option>By Layer</option></select><i class="sw rule"></i></div>
<label for="e">Linetype:</label><div class="combo"><select id="e"><option>By Layer</option></select></div>
<label for="f">Linetype Scale:</label><input id="f" value="1">
<label for="g">Draw Order:</label><input id="g" value="29">
<label for="h">Handle:</label><input id="h" value="0x58" readonly>
</div></fieldset></div><scroll-bar></scroll-bar>`);

/* Row of equally wide icon buttons under a dock heading */
define('icon-row', `<style>
:host{display:flex;gap:2px;padding:3px 1px 1px}
button{flex:1;height:24px;box-sizing:border-box;padding:0;border:1px solid #adadad;background:#e1e1e1;display:flex;align-items:center;justify-content:center}
button:disabled{background:#ccc;border-color:#bfbfbf}
</style>`, (el,root)=>{
  root.innerHTML += el.getAttribute('icons').split(' ').map(n=>`<button ${n[0]==='-'?'disabled':''} aria-label="${n.replace('-','')}"><x-icon name="${n.replace('-','')}"></x-icon></button>`).join('');
});

define('layer-list', `<style>
:host{flex:1;display:block;border:1px solid #828790;background:#fff}
div{display:flex;align-items:center;height:22px;background:#d9d9d9;font-size:14px;padding:0 5px 0 3px}
i{width:14px;height:7px;border:1px solid #12314f;background:#bfdfff;margin-right:6px}
span{flex:1}.e{margin-right:7px}.s{margin-right:8px}
</style><div><i></i><span>0</span><x-icon class="e" name="eyeBlue"></x-icon><x-icon class="s" name="sun"></x-icon><x-icon name="lock"></x-icon></div>`);

define('cam-simulation', `<style>
:host{display:block;height:124px;box-sizing:border-box;padding:11px 11px 0}
.r{display:grid;grid-template-columns:62px minmax(0,1fr);height:34px;line-height:16px}
label{padding-top:13px}
icon-row{padding-bottom:2px}
.s{display:flex;flex-direction:column}
svg{width:100%;height:6px;margin-top:6px;overflow:visible;display:block}
input{appearance:none;width:100%;height:19px;margin:0;background:linear-gradient(#d6d6d6,#d6d6d6) 0 8px/100% 4px no-repeat}
input::-webkit-slider-thumb{appearance:none;width:11px;height:19px;background:#0078d7;clip-path:polygon(50% 0,100% 30%,100% 100%,0 100%,0 30%)}
</style><icon-row icons="play pause stop"></icon-row>
<div class="r"><label for="s">Speed:</label><div class="s"><svg></svg><input id="s" type="range" value="19"></div></div>
<div class="r"><label for="p">Progress:</label><div class="s"><svg></svg><input id="p" type="range" value="0"></div></div>`, (el,root)=>{
  root.querySelectorAll('svg').forEach(s=>s.innerHTML = Array.from({length:11},(_,i)=>`<rect x="${3+i*9.3}%" y="${i%10?1:0}" width="1" height="${i%10?4:5}" fill="#a09a8c"/>`).join(''));
});

define('toolpath-table', `<style>
:host{display:block;height:87px;box-sizing:border-box;border:1px solid #828790;background:#fff}
table{width:100%;border-collapse:collapse;table-layout:fixed}
th{font:14px/20px "Noto Sans",sans-serif;text-align:left;height:30px;padding:1px 0 0 4px;border-right:1px solid #e5e5e5;box-sizing:border-box}
</style><table><thead><tr><th style="width:22px" aria-label="Visible"></th><th style="width:112px">Toolpath</th><th style="width:40px">Tool</th><th>Type</th></tr></thead></table>`);

define('widget-bar', `<style>
:host{display:flex;flex-direction:column;align-items:center;width:37px;border-left:1px solid #fff;border-right:1px solid #b4b4b4;border-bottom:1px solid #b4b4b4}
i{width:32px;height:3px;margin:2px 0 6px;background:radial-gradient(circle,#bbb 1px,transparent 2px) 0 0/4px 3px repeat-x}
</style><i></i>`, (el,root)=>{
  root.innerHTML += '*fLib fBlock fView | *fProp fFilter fLamp | *fCmd fClip | fTool1 *fTool2 threeD *fSim'.split(' ').map(n=>n==='|'?'<tool-sep flat></tool-sep>':
   `<tool-button label="${n.replace('*','')}" ${n[0]==='*'?'on':''}><x-icon name="${n.replace('*','')}"></x-icon></tool-button>`).join('');
});

define('status-bar', `<style>
:host{display:grid;grid-template-columns:326px minmax(0,508px) minmax(0,389px) 1fr;height:45px;align-items:center;font-size:14px;line-height:20px}
div{padding-left:2px}
.b{border-left:1px solid #999;padding-left:3px}
.m{display:flex;align-items:center;gap:11px;padding:0}
.e{padding:0}
</style><div>90.5646,33.6119<br>@33.4197,2.7051</div><div class="b">96.6007&lt;20°<br>@33.529&lt;5°</div><div class="m">Point on arc <x-icon name="mouse"></x-icon> Back</div><div class="e">Selected entities:<br>1 Line on Layer "0".</div>`);

define('task-item', `<style>
:host{display:flex;width:54px;height:50px;flex:none}
:host([wide]){width:119px}
button{flex:1;position:relative;display:flex;align-items:center;justify-content:center;gap:5px;border:0;padding:0;background:none;color:#fff;font:14px/20px "Noto Sans",sans-serif;white-space:nowrap}
:host([wide]) button{justify-content:flex-start;padding-left:10px}
:host([wide]) button::after{content:"";position:absolute;left:5px;right:6px;bottom:0;height:3px;background:#76b9ed}
:host([multi]) button::after{background:linear-gradient(90deg,#76b9ed 97px,#5f92bb 97px)}
:host([on]) button{background:#333}
:host([on]) button::after{left:0;right:0}
</style><button><slot></slot></button>`);

define('task-bar', `<style>
:host{display:flex;height:50px;background:#101010;color:#fff}
label{display:flex;align-items:center;width:430px;box-sizing:border-box;background:#f3f3f3;border:1px solid #bbb;border-width:1px 0;padding-left:15px;gap:14px}
input{flex:1;min-width:0;border:0;background:none;outline:0;padding:0;font:18px "Noto Sans",sans-serif}
input::placeholder{color:#3a3a3a;opacity:1}
.w60{width:60px}.store{width:57px}
.tray{margin-left:auto;display:flex;align-items:center}
.tray task-item{width:40px}
time{width:84px;text-align:center;font-size:14px;line-height:23px;margin-left:6px}
.tray .n{width:50px}
.end{width:5px;height:50px;border-left:1px solid #666;margin-left:10px}
</style>
<task-item class="w60"><x-icon name="win"></x-icon></task-item>
<label><x-icon name="search"></x-icon><input placeholder="Type here to search" aria-label="Type here to search"></label>
<task-item class="w60"><x-icon name="cortana"></x-icon></task-item><task-item class="w60"><x-icon name="taskview"></x-icon></task-item>
<task-item class="store"><x-icon name="store"></x-icon></task-item><task-item><x-icon name="calc"></x-icon></task-item><task-item><x-icon name="chrome"></x-icon></task-item>
<task-item wide multi><x-icon name="paint"></x-icon>Paint</task-item><task-item><x-icon name="edge"></x-icon></task-item>
<task-item wide><x-icon name="folder" style="margin:0 6px 0 4px"></x-icon>CAD-Files</task-item><task-item><x-icon name="wheel"></x-icon></task-item>
<task-item wide><x-icon name="firefox"></x-icon>QCAD.o...</task-item><task-item wide><x-icon name="tv"></x-icon>TeamVie...</task-item><task-item wide on><x-icon name="qcadBig"></x-icon>Tangenti...</task-item>
<div class="tray"><task-item><x-icon name="caret"></x-icon></task-item><task-item><x-icon name="dropbox"></x-icon></task-item><task-item><x-icon name="onedrive"></x-icon></task-item><task-item><x-icon name="battery"></x-icon></task-item><task-item><x-icon name="volume"></x-icon></task-item><task-item><x-icon name="wifi"></x-icon></task-item><task-item><x-icon name="ink"></x-icon></task-item>
<time>5:43 PM<br>8/7/2019</time><task-item class="n"><x-icon name="notify"></x-icon></task-item><div class="end"></div></div>`);

define('cad-app', `<style>
:host{display:flex;flex-direction:column;height:100vh}
main{flex:1;display:flex;min-height:0}
.center{flex:1;display:flex;flex-direction:column;min-width:0}
.docks{width:256px;margin-left:5px;display:flex;flex-direction:column;gap:6px}
.grow{flex:1}
</style>
<title-bar></title-bar><menu-bar></menu-bar><main-toolbar></main-toolbar><option-bar></option-bar>
<main><snap-palette></snap-palette>
<div class="center"><drawing-view></drawing-view><command-line></command-line></div>
<div class="docks">
<dock-panel heading="Property Editor"><property-form></property-form></dock-panel>
<dock-panel class="grow" heading="Layer List"><icon-row icons="eyeBlack eyeGray plus -minus pen"></icon-row><layer-list></layer-list></dock-panel>
<dock-panel heading="CAM Simulation"><cam-simulation></cam-simulation></dock-panel>
<dock-panel heading="CAM Toolpaths"><icon-row icons="-minus -penGray -undoGray chain arrowup arrowdown"></icon-row><toolpath-table></toolpath-table></dock-panel>
</div><widget-bar></widget-bar></main>
<status-bar></status-bar><task-bar></task-bar>`);
</script>
</body>
</html>
